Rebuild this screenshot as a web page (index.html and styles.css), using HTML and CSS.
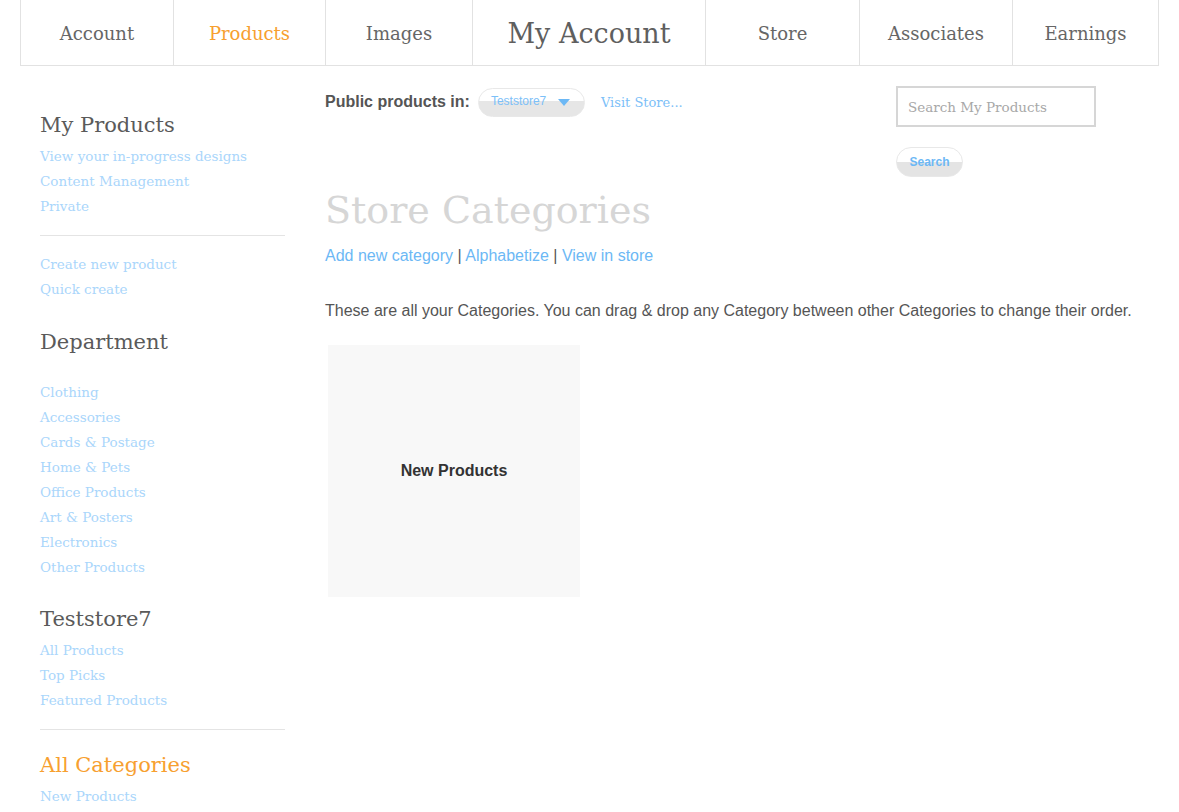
FILE: index.html
```html
<!DOCTYPE html>
<html lang="en">
<head>
  <meta charset="UTF-8">
  <title>My Account - Store Categories</title>
  <link rel="stylesheet" href="styles.css">
</head>
<body>
  <nav class="topnav">
    <a class="tab" href="#">Account</a>
    <a class="tab current" href="#">Products</a>
    <a class="tab" href="#">Images</a>
    <a class="tab title" href="#">My Account</a>
    <a class="tab" href="#">Store</a>
    <a class="tab" href="#">Associates</a>
    <a class="tab" href="#">Earnings</a>
  </nav>

  <div class="page">
    <aside class="sidebar">
      <h3>My Products</h3>
      <a href="#">View your in-progress designs</a>
      <a href="#">Content Management</a>
      <a href="#">Private</a>
      <hr>
      <a href="#">Create new product</a>
      <a href="#">Quick create</a>

      <h3 class="dept">Department</h3>
      <a href="#">Clothing</a>
      <a href="#">Accessories</a>
      <a href="#">Cards &amp; Postage</a>
      <a href="#">Home &amp; Pets</a>
      <a href="#">Office Products</a>
      <a href="#">Art &amp; Posters</a>
      <a href="#">Electronics</a>
      <a href="#">Other Products</a>

      <h3 class="store">Teststore7</h3>
      <a href="#">All Products</a>
      <a href="#">Top Picks</a>
      <a href="#">Featured Products</a>
      <hr>
      <h3 class="active">All Categories</h3>
      <a href="#">New Products</a>
    </aside>

    <main class="main">
      <div class="toolbar">
        <div class="public">
          <span class="label">Public products in:</span>
          <span class="select">Teststore7 <i class="caret"></i></span>
          <a class="visit" href="#">Visit Store...</a>
        </div>
        <div class="search">
          <input type="text" placeholder="Search My Products">
          <button class="pill">Search</button>
        </div>
      </div>

      <h1>Store Categories</h1>
      <p class="actions"><a href="#">Add new category</a> | <a href="#">Alphabetize</a> | <a href="#">View in store</a></p>
      <p class="intro">These are all your Categories. You can drag &amp; drop any Category between other Categories to change their order.</p>

      <div class="tiles">
        <div class="tile">New Products</div>
      </div>
    </main>
  </div>
</body>
</html>
```

FILE: styles.css
```css
* {
  box-sizing: border-box;
}

body {
  margin: 0;
  background: #fff;
  font-family: "DejaVu Serif", serif;
  color: #5a5a5a;
}

a {
  text-decoration: none;
}

.topnav {
  display: flex;
  margin: 0 20px;
  height: 66px;
  border: 1px solid #e2e2e2;
  border-top: 0;
}

.tab {
  display: flex;
  align-items: center;
  justify-content: center;
  width: 152px;
  border-left: 1px solid #e2e2e2;
  color: #666;
  font-size: 18px;
  padding-top: 2px;
}

.tab:first-child {
  border-left: 0;
}

.tab.current {
  color: #f7a030;
}

.tab:nth-child(3) {
  width: 147px;
}

.tab.title {
  width: 233px;
  font-size: 27px;
  color: #5f5f5f;
}

.tab:nth-child(5) {
  width: 154px;
}

.tab:nth-child(6) {
  width: 153px;
}

.tab:nth-child(7) {
  flex: 1;
}

.page {
  display: flex;
  padding: 0 20px 0 40px;
}

.sidebar {
  width: 245px;
  flex-shrink: 0;
  padding-top: 46px;
}

.sidebar h3 {
  margin: 0 0 6px;
  font-size: 21px;
  font-weight: normal;
  color: #5a5a5a;
  line-height: 26px;
}

.sidebar h3.dept {
  margin-top: 27px;
  margin-bottom: 25px;
}

.sidebar h3.store {
  margin-top: 26px;
}

.sidebar h3.active {
  color: #f7a030;
  margin-top: 22px;
}

.sidebar a {
  display: block;
  font-size: 13.5px;
  line-height: 25px;
  color: #aad6fb;
}

.sidebar hr {
  border: 0;
  border-top: 1px solid #e4e4e4;
  margin: 16px 0 16px;
}

.main {
  flex: 1;
  padding-left: 40px;
  padding-top: 20px;
  font-family: "Liberation Sans", Arial, sans-serif;
}

.toolbar {
  display: flex;
  justify-content: space-between;
  padding-right: 63px;
}

.public {
  display: flex;
  align-items: center;
  height: 30px;
  margin-top: 1px;
}

.label {
  font-weight: bold;
  font-size: 16px;
  color: #555;
  margin-right: 8px;
}

.select {
  display: flex;
  align-items: center;
  justify-content: space-between;
  width: 107px;
  height: 29px;
  padding: 0 14px 2px 12px;
  border: 1px solid #e8e8e8;
  border-radius: 15px;
  background: linear-gradient(#fff 0, #fff 46%, #e6e6e6 46%, #e6e6e6 100%);
  color: #7cc0f8;
  font-size: 12px;
}

.caret {
  width: 0;
  height: 0;
  border-left: 6px solid transparent;
  border-right: 6px solid transparent;
  border-top: 7px solid #6cb8f5;
  margin-top: 3px;
}

.visit {
  margin-left: 16px;
  font-family: "DejaVu Serif", serif;
  font-size: 13px;
  color: #7cc0f8;
}

.search {
  display: flex;
  flex-direction: column;
  align-items: flex-start;
  width: 200px;
}

.search input {
  width: 200px;
  height: 41px;
  border: 2px solid #d6d6d6;
  padding: 0 10px;
  font-family: "DejaVu Serif", serif;
  font-size: 13.5px;
  color: #555;
}

.search input::placeholder {
  color: #a8a8a8;
}

.pill {
  margin-top: 20px;
  width: 67px;
  height: 30px;
  border: 1px solid #e8e8e8;
  border-radius: 15px;
  background: linear-gradient(#fff 0, #fff 50%, #e4e4e4 50%, #e4e4e4 100%);
  color: #6cb8f5;
  font-family: "Liberation Sans", Arial, sans-serif;
  font-weight: bold;
  font-size: 12px;
  padding: 0;
}

h1 {
  margin: 5px 0 0;
  font-family: "DejaVu Serif", serif;
  font-weight: 300;
  font-size: 38px;
  line-height: 56px;
  color: #d6d6d6;
}

.actions {
  margin: 9px 0 0;
  font-size: 16px;
  color: #555;
}

.actions a {
  color: #6cb8f5;
}

.intro {
  margin: 37px 0 0;
  font-size: 16px;
  color: #555;
}

.tiles {
  display: flex;
  margin-top: 25px;
  padding-left: 3px;
}

.tile {
  display: flex;
  align-items: center;
  justify-content: center;
  width: 252px;
  height: 252px;
  background: #f8f8f8;
  font-weight: bold;
  font-size: 16px;
  color: #333;
}
```
